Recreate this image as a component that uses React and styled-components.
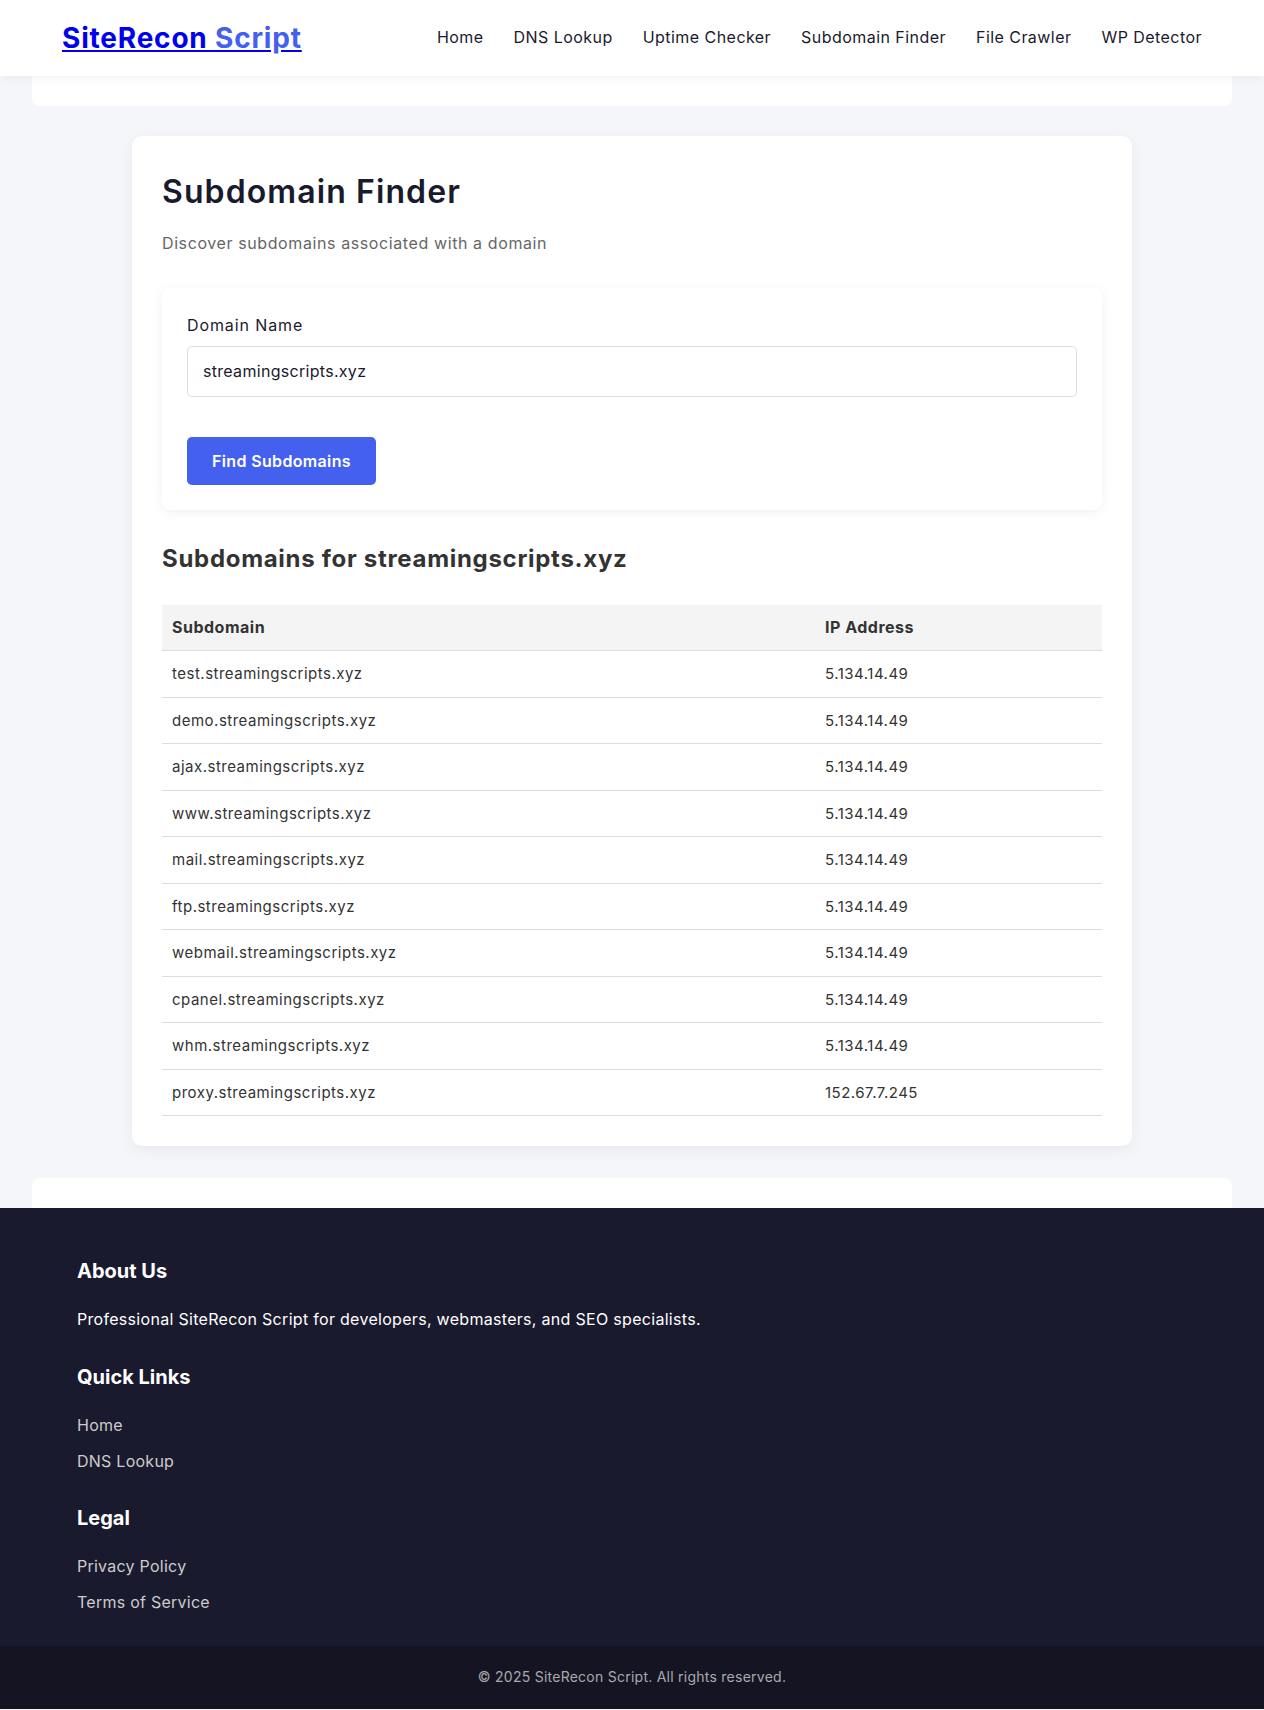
import styled, { createGlobalStyle } from "styled-components";

const GlobalStyle = createGlobalStyle`
  * {
    box-sizing: border-box;
  }
  body {
    margin: 0;
    font-family: "Inter", "Open Sans", sans-serif;
    line-height: 1.6;
    color: #333;
    background: #f5f6fa;
  }
`;

const Header = styled.header`
  background: #fff;
  box-shadow: 0 2px 10px rgba(0, 0, 0, 0.06);
  position: relative;
  z-index: 2;
`;

const HeaderInner = styled.div`
  max-width: 1200px;
  margin: 0 auto;
  height: 76px;
  padding: 0 30px;
  display: flex;
  align-items: center;
  justify-content: space-between;
`;

const Logo = styled.a`
  font-size: 28px;
  font-weight: 700;
  color: #0000ee;
  text-decoration: underline;
  letter-spacing: 0.8px;
`;

const LogoAccent = styled.span`
  color: #4361ee;
`;

const Nav = styled.nav`
  display: flex;
  gap: 30px;
`;

const NavLink = styled.a`
  font-size: 16px;
  color: #1a1a2e;
  text-decoration: none;
  letter-spacing: 0.45px;
`;

const AdSlot = styled.div`
  max-width: 1200px;
  height: 30px;
  margin: ${(p) => (p.$bottom ? "32px auto 0" : "0 auto")};
  background: #fff;
  border-radius: ${(p) => (p.$bottom ? "8px 8px 0 0" : "0 0 8px 8px")};
`;

const Main = styled.main`
  padding: 30px 0 0;
`;

const Card = styled.section`
  max-width: 1000px;
  margin: 0 auto;
  background: #fff;
  border-radius: 10px;
  padding: 30px;
  box-shadow: 0 4px 15px rgba(0, 0, 0, 0.06);
`;

const Title = styled.h1`
  margin: 0 0 14px;
  font-size: 32px;
  font-weight: 600;
  color: #1a1a2e;
  line-height: 1.6;
  letter-spacing: 1.1px;
`;

const Subtitle = styled.p`
  margin: 0 0 31px;
  font-size: 16px;
  color: #666;
  letter-spacing: 0.6px;
`;

const FormPanel = styled.form`
  background: #fff;
  border-radius: 8px;
  padding: 25px;
  box-shadow: 0 2px 12px rgba(0, 0, 0, 0.06);
`;

const Label = styled.label`
  display: block;
  font-size: 16px;
  color: #1a1a2e;
  margin-bottom: 8px;
  letter-spacing: 0.9px;
`;

const Input = styled.input`
  display: block;
  width: 100%;
  padding: 11.5px 15px;
  font: inherit;
  font-size: 16px;
  line-height: 1.6;
  letter-spacing: 0.3px;
  color: #1a1a2e;
  border: 1px solid #ddd;
  border-radius: 5px;
  margin-bottom: 40px;
  outline: none;
`;

const Button = styled.button`
  font: inherit;
  font-size: 16px;
  font-weight: 600;
  line-height: 24px;
  letter-spacing: 0.35px;
  color: #fff;
  background: #4361ee;
  border: none;
  border-radius: 5px;
  padding: 12px 25px;
  cursor: pointer;
`;

const ResultsTitle = styled.h2`
  margin: 30px 0 27px;
  font-size: 24px;
  font-weight: 700;
  color: #333;
  line-height: 1.6;
  letter-spacing: 0.7px;
`;

const Table = styled.table`
  width: 100%;
  border-collapse: collapse;
  font-size: 15px;
`;

const Th = styled.th`
  text-align: left;
  font-size: 16px;
  font-weight: 700;
  letter-spacing: 0.5px;
  background: #f4f4f4;
  padding: 10px 10px;
  line-height: 25px;
  border-bottom: 1px solid #ddd;
  width: ${(p) => p.$w || "auto"};
`;

const Td = styled.td`
  padding: 11px 10px;
  line-height: 23.5px;
  letter-spacing: 0.5px;
  border-bottom: 1px solid #ddd;
  color: #333;
`;

const Footer = styled.footer`
  margin: 0;
  background: #1a1a2e;
  color: #fff;
`;

const FooterInner = styled.div`
  max-width: 1140px;
  margin: 0 auto;
  padding: 47px 15px 31px;
  display: flex;
  flex-direction: column;
  gap: 28px;
`;

const FooterSection = styled.div``;

const FooterHeading = styled.h3`
  margin: 0 0 20px;
  font-size: 20px;
  font-weight: 700;
  line-height: 1.6;
`;

const FooterText = styled.p`
  margin: 0;
  font-size: 16px;
  color: #fff;
  letter-spacing: 0.3px;
`;

const FooterLinks = styled.ul`
  list-style: none;
  margin: 0;
  padding: 0;
  display: flex;
  flex-direction: column;
  gap: 10px;
`;

const FooterLink = styled.a`
  font-size: 16px;
  color: #ccc;
  text-decoration: none;
  letter-spacing: 0.25px;
`;

const Copyright = styled.div`
  background: #141423;
  color: #aaa;
  text-align: center;
  font-size: 14px;
  letter-spacing: 0.25px;
  padding: 20px 0;
  line-height: 22.4px;
`;

const navItems = [
  "Home",
  "DNS Lookup",
  "Uptime Checker",
  "Subdomain Finder",
  "File Crawler",
  "WP Detector",
];

const results = [
  ["test.streamingscripts.xyz", "5.134.14.49"],
  ["demo.streamingscripts.xyz", "5.134.14.49"],
  ["ajax.streamingscripts.xyz", "5.134.14.49"],
  ["www.streamingscripts.xyz", "5.134.14.49"],
  ["mail.streamingscripts.xyz", "5.134.14.49"],
  ["ftp.streamingscripts.xyz", "5.134.14.49"],
  ["webmail.streamingscripts.xyz", "5.134.14.49"],
  ["cpanel.streamingscripts.xyz", "5.134.14.49"],
  ["whm.streamingscripts.xyz", "5.134.14.49"],
  ["proxy.streamingscripts.xyz", "152.67.7.245"],
];

const App = () => {
  return (
    <>
      <GlobalStyle />
      <Header>
        <HeaderInner>
          <Logo href="#">
            SiteRecon <LogoAccent>Script</LogoAccent>
          </Logo>
          <Nav>
            {navItems.map((item) => (
              <NavLink key={item} href="#">
                {item}
              </NavLink>
            ))}
          </Nav>
        </HeaderInner>
      </Header>

      <AdSlot />

      <Main>
        <Card>
          <Title>Subdomain Finder</Title>
          <Subtitle>Discover subdomains associated with a domain</Subtitle>

          <FormPanel onSubmit={(e) => e.preventDefault()}>
            <Label htmlFor="domain">Domain Name</Label>
            <Input id="domain" type="text" defaultValue="streamingscripts.xyz" />
            <Button type="submit">Find Subdomains</Button>
          </FormPanel>

          <ResultsTitle>Subdomains for streamingscripts.xyz</ResultsTitle>
          <Table>
            <thead>
              <tr>
                <Th $w="653px">Subdomain</Th>
                <Th>IP Address</Th>
              </tr>
            </thead>
            <tbody>
              {results.map(([sub, ip]) => (
                <tr key={sub}>
                  <Td>{sub}</Td>
                  <Td>{ip}</Td>
                </tr>
              ))}
            </tbody>
          </Table>
        </Card>
      </Main>

      <AdSlot $bottom />

      <Footer>
        <FooterInner>
          <FooterSection>
            <FooterHeading>About Us</FooterHeading>
            <FooterText>
              Professional SiteRecon Script for developers, webmasters, and SEO
              specialists.
            </FooterText>
          </FooterSection>
          <FooterSection>
            <FooterHeading>Quick Links</FooterHeading>
            <FooterLinks>
              <li>
                <FooterLink href="#">Home</FooterLink>
              </li>
              <li>
                <FooterLink href="#">DNS Lookup</FooterLink>
              </li>
            </FooterLinks>
          </FooterSection>
          <FooterSection>
            <FooterHeading>Legal</FooterHeading>
            <FooterLinks>
              <li>
                <FooterLink href="#">Privacy Policy</FooterLink>
              </li>
              <li>
                <FooterLink href="#">Terms of Service</FooterLink>
              </li>
            </FooterLinks>
          </FooterSection>
        </FooterInner>
        <Copyright>© 2025 SiteRecon Script. All rights reserved.</Copyright>
      </Footer>
    </>
  );
};

export default App;
